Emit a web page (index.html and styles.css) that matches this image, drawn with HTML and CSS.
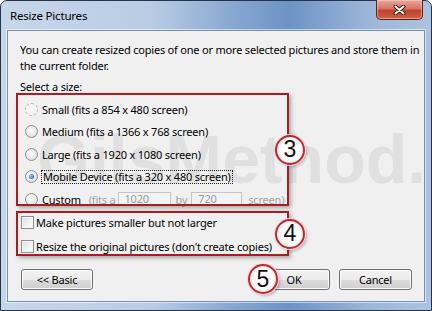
FILE: index.html
```html
<!DOCTYPE html>
<html lang="en">
<head>
    <meta charset="UTF-8">
    <meta name="viewport" content="width=device-width, initial-scale=1.0">
    <title>Resize Pictures</title>

    <link rel="stylesheet" href="styles.css">
</head>
<body>
    <div class="window">
        <div class="titlebar">
            <span class="title">Resize Pictures</span>
            <button class="close" type="button">
                <svg width="13" height="10" viewBox="0 0 13 10">
                    <path d="M2.5 1.5 L10.5 8.5 M10.5 1.5 L2.5 8.5" stroke="#3b1712" stroke-width="4" stroke-linecap="round"/>
                    <path d="M2.5 1.5 L10.5 8.5 M10.5 1.5 L2.5 8.5" stroke="#ffffff" stroke-width="2" stroke-linecap="round"/>
                </svg>
            </button>
        </div>

        <div class="client">
            <div class="watermark">GilsMethod.</div>

            <p class="intro">You can create resized copies of one or more selected pictures and store them in<br>the current folder.</p>
            <div class="caption">Select a size:</div>

            <!-- sizes -->
            <div class="callout sizes">
                <div class="row"><span class="radio faded"></span>Small (fits a 854 x 480 screen)</div>
                <div class="row"><span class="radio"></span>Medium (fits a 1366 x 768 screen)</div>
                <div class="row"><span class="radio"></span>Large (fits a 1920 x 1080 screen)</div>
                <div class="row"><span class="radio checked"></span><span class="focus">Mobile Device (fits a 320 x 480 screen)</span></div>
                <div class="row custom">
                    <span class="radio"></span>Custom
                    <span class="dim fits">(fits a</span>
                    <span class="field wide">1020</span>
                    <span class="dim by">by</span>
                    <span class="field">720</span>
                    <span class="dim end">screen)</span>
                </div>
                <span class="badge">3</span>
            </div>

            <!-- options -->
            <div class="callout options">
                <div class="row"><span class="check"></span>Make pictures smaller but not larger</div>
                <div class="row"><span class="check"></span>Resize the original pictures (don't create copies)</div>
                <span class="badge">4</span>
            </div>

            <div class="buttons">
                <button class="btn" type="button">&lt;&lt; Basic</button>
                <div class="ok-wrap">
                    <span class="badge">5</span>
                    <button class="btn" type="button">OK</button>
                </div>
                <button class="btn cancel" type="button">Cancel</button>
            </div>
        </div>
    </div>
</body>
</html>
```

FILE: styles.css
```css
/* Windows 7 style dialog */
* {
    box-sizing: border-box;
}

body {
    margin: 0;
    background: #fff;
    font-family: "Noto Sans", "Open Sans", sans-serif;
    font-size: 11px;
    letter-spacing: -0.2px;
    color: #000;
}

.window {
    width: 432px;
    height: 311px;
    border: 1px solid #26344a;
    border-radius: 7px 7px 0 0;
    background: linear-gradient(to right, #c7d7ea 0%, #b9cce5 35%, #85a6d0 55%, #6d93c5 67%, #9db7d8 86%, #abc3df 100%);
    padding: 0 6px 8px;
    display: flex;
    flex-direction: column;
}

.titlebar {
    height: 29px;
    display: flex;
    align-items: flex-start;
}

.title {
    padding: 7px 0 0 3px;
    line-height: 16px;
    font-size: 11.5px;
}

.close {
    margin: -1px 2px 0 auto;
    width: 47px;
    height: 20px;
    padding: 0;
    border: 1px solid #5e1d16;
    border-top: none;
    border-radius: 0 0 5px 5px;
    background: linear-gradient(#e9a89b 0%, #d77563 45%, #c3402c 55%, #cf6146 100%);
    box-shadow: inset 0 0 0 1px rgba(255, 220, 210, 0.5);
    display: flex;
    align-items: center;
    justify-content: center;
}

.client {
    flex: 1;
    position: relative;
    z-index: 0;
    border: 1px solid #7892b5;
    box-shadow: 0 0 0 1px rgba(255, 255, 255, 0.55);
    background: #f0f0f0;
}

.watermark {
    position: absolute;
    z-index: -1;
    left: 29px;
    top: 94px;
    font-family: "Liberation Sans", sans-serif;
    font-weight: bold;
    font-size: 68px;
    line-height: 1;
    letter-spacing: 0;
    color: #e0e0e0;
    white-space: nowrap;
}

.intro {
    margin: 0;
    padding: 11px 12px 0;
    line-height: 16px;
    white-space: nowrap;
}

.caption {
    margin-top: 6px;
    padding-left: 12px;
    line-height: 14px;
}

/* red annotation boxes */
.callout {
    position: relative;
    width: 273px;
    margin-left: 8px;
}

.callout::after {
    content: "";
    position: absolute;
    inset: 0;
    border: 2px solid #a91d22;
    box-shadow: 2px 2px 4px rgba(0, 0, 0, 0.3);
}

.sizes {
    height: 113px;
    margin-top: -1px;
    padding: 5px 0 0 9px;
}

.sizes .row {
    height: 22.5px;
    display: flex;
    align-items: center;
    gap: 4px;
    white-space: nowrap;
}

.options {
    height: 45px;
    margin-top: 5px;
    padding: 2px 0 0 5px;
    display: flex;
    flex-direction: column;
    gap: 4px;
}

.options .row {
    height: 20px;
    display: flex;
    align-items: center;
    gap: 2px;
    white-space: nowrap;
}

.radio {
    width: 13px;
    height: 13px;
    flex: none;
    border-radius: 50%;
    border: 1px solid #8b8d8f;
    background: radial-gradient(circle at 40% 40%, #fcfcfc 0%, #e6e6e6 60%, #d2d2d2 100%);
    position: relative;
}

.radio.faded {
    border: 1px dashed #b5b9bd;
    background: radial-gradient(circle at 40% 40%, #fbfbfb 0%, #ececec 100%);
}

.radio.checked::after {
    content: "";
    position: absolute;
    left: 3px;
    top: 3px;
    width: 5px;
    height: 5px;
    border-radius: 50%;
    background: radial-gradient(circle at 40% 40%, #a9d2f5 0%, #2a6fb9 70%, #1d4e8c 100%);
}

.focus {
    margin-left: -1px;
    padding: 0 1px;
    line-height: 12px;
    border: 1px dotted #222;
}

.custom .dim {
    color: #a3a3a3;
}

.custom .fits {
    margin-left: 4px;
}

.custom .by {
    margin-left: 1px;
}

.custom .end {
    margin-left: 2px;
}

.field {
    width: 51px;
    height: 14px;
    margin-top: -1px;
    padding-left: 6px;
    line-height: 12px;
    border: 1px solid #c5c5c5;
    background: #f3f3f3;
    color: #9a9a9a;
}

.field.wide {
    width: 53px;
    margin-left: -2px;
}

.check {
    width: 13px;
    height: 13px;
    flex: none;
    border: 1px solid #8b8d8f;
    background: linear-gradient(135deg, #dcdcdc 0%, #f4f4f4 60%, #fefefe 100%);
    box-shadow: inset 0 0 0 1px #f6f6f6;
}

/* numbered markers */
.badge {
    position: absolute;
    z-index: 1;
    width: 30px;
    height: 30px;
    border-radius: 50%;
    border: 2px solid #c1272d;
    background: radial-gradient(circle, #ffffff 50%, #f6e4e4 80%, #e9c3c3 100%);
    box-shadow: 0 0 0 1px #f4dede, 2px 2px 3px rgba(0, 0, 0, 0.25);
    display: flex;
    align-items: center;
    justify-content: center;
    font-family: "Liberation Sans", sans-serif;
    font-size: 23px;
    letter-spacing: 0;
    color: #111;
}

.callout .badge {
    right: -16px;
    top: 50%;
    transform: translateY(-50%);
}

.buttons {
    margin-top: 13px;
    padding: 0 12px 0 13px;
    display: flex;
}

.btn {
    width: 72px;
    height: 21px;
    padding: 0;
    border: 1px solid #707070;
    border-radius: 3px;
    background: linear-gradient(#f2f2f2 0%, #ebebeb 50%, #dddddd 51%, #cfcfcf 100%);
    box-shadow: inset 0 0 0 1px #fbfbfb;
    font-family: inherit;
    font-size: 11px;
    letter-spacing: -0.2px;
    color: #000;
}

.ok-wrap {
    position: relative;
    margin-left: auto;
}

.ok-wrap .badge {
    left: -10px;
    top: -5px;
}

.cancel {
    width: 73px;
    margin-left: 9px;
}
```
